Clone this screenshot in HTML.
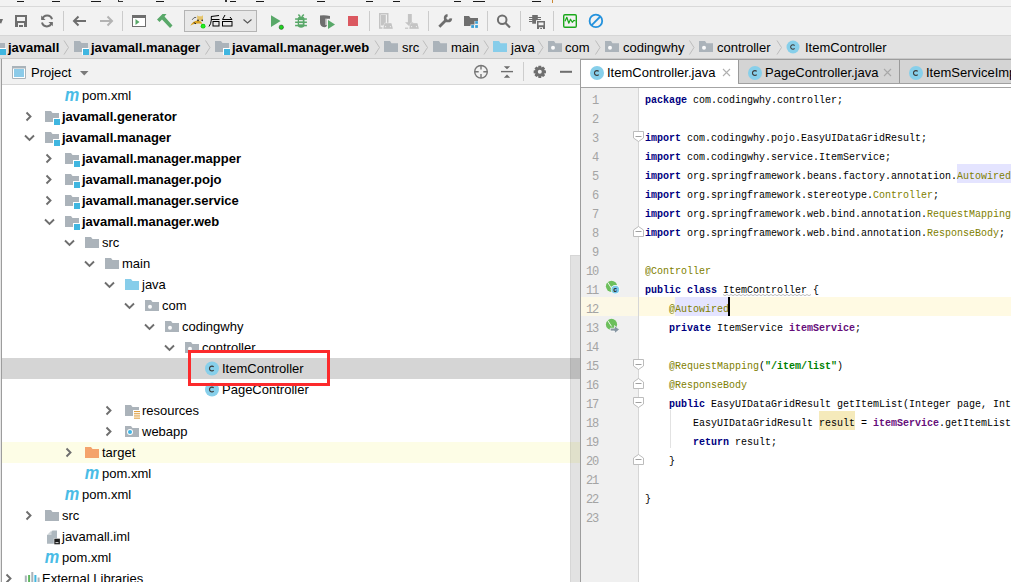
<!DOCTYPE html><html><head><meta charset="utf-8"><style>

*{margin:0;padding:0;box-sizing:border-box}
html,body{width:1011px;height:582px;overflow:hidden;background:#f2f2f2;font-family:"Liberation Sans",sans-serif;font-size:13px;color:#000}
.a{position:absolute}
.t{position:absolute;white-space:pre;line-height:16px}
.b{font-weight:bold}
.ln{position:absolute;left:581px;width:17px;padding-top:4px;text-align:right;font-family:"Liberation Mono",monospace;font-size:12px;color:#a4a4a4;line-height:19px;height:19px;letter-spacing:-1.2px}
.cl{position:absolute;left:645px;padding-top:2px;transform:scaleX(0.8696);transform-origin:0 0;font-family:"Liberation Mono",monospace;font-size:11.5px;line-height:19px;height:19px;white-space:pre;letter-spacing:0px;color:#000}
.k{color:#000080;font-weight:bold}
.an{color:#808000}
.st{color:#008000;font-weight:bold}
.fd{color:#660e7a;font-weight:bold}
#ov{position:absolute;left:0;top:0}

</style></head><body>
<div class="a" style="left:0px;top:0px;width:1011px;height:6px;background:#f2f2f2;"></div>
<div class="a" style="left:0px;top:6px;width:1011px;height:1px;background:#d9d9d9;"></div>
<div class="a" style="left:17px;top:1px;width:7px;height:1px;background:#1a1a1a;"></div>
<div class="a" style="left:52px;top:1px;width:8px;height:1px;background:#1a1a1a;"></div>
<div class="a" style="left:91px;top:1px;width:10px;height:1px;background:#1a1a1a;"></div>
<div class="a" style="left:156px;top:1px;width:8px;height:1px;background:#1a1a1a;"></div>
<div class="a" style="left:230px;top:1px;width:6px;height:1px;background:#1a1a1a;"></div>
<div class="a" style="left:256px;top:1px;width:8px;height:1px;background:#1a1a1a;"></div>
<div class="a" style="left:317px;top:1px;width:8px;height:1px;background:#1a1a1a;"></div>
<div class="a" style="left:366px;top:1px;width:7px;height:1px;background:#1a1a1a;"></div>
<div class="a" style="left:393px;top:1px;width:7px;height:1px;background:#1a1a1a;"></div>
<div class="a" style="left:454px;top:1px;width:7px;height:1px;background:#1a1a1a;"></div>
<div class="a" style="left:473px;top:1px;width:12px;height:1px;background:#1a1a1a;"></div>
<div class="a" style="left:532px;top:1px;width:9px;height:1px;background:#1a1a1a;"></div>
<div class="a" style="left:118px;top:0px;width:1px;height:2px;background:#333;"></div>
<div class="a" style="left:119px;top:1px;width:4px;height:1px;background:#333;"></div>
<div class="a" style="left:225px;top:0px;width:2px;height:2px;background:#333;"></div>
<div class="a" style="left:552px;top:0px;width:1px;height:3px;background:#cc8833;"></div>
<div class="a" style="left:370px;top:1px;width:3px;height:1px;background:#1a1a1a;"></div>
<div class="a" style="left:0px;top:7px;width:1011px;height:28px;background:#f2f2f2;"></div>
<div class="a" style="left:63px;top:11px;width:1px;height:20px;background:#cbcbcb;"></div>
<div class="a" style="left:122px;top:11px;width:1px;height:20px;background:#cbcbcb;"></div>
<div class="a" style="left:369px;top:11px;width:1px;height:20px;background:#cbcbcb;"></div>
<div class="a" style="left:428px;top:11px;width:1px;height:20px;background:#cbcbcb;"></div>
<div class="a" style="left:487px;top:11px;width:1px;height:20px;background:#cbcbcb;"></div>
<div class="a" style="left:520px;top:11px;width:1px;height:20px;background:#cbcbcb;"></div>
<div class="a" style="left:553px;top:11px;width:1px;height:20px;background:#cbcbcb;"></div>
<div class="a" style="left:0px;top:35px;width:1011px;height:1px;background:#d6d6d6;"></div>
<div class="a" style="left:0px;top:36px;width:1011px;height:23px;background:#e2e2e2;"></div>
<div class="a" style="left:0px;top:58px;width:1011px;height:1px;background:#c9c9c9;"></div>
<div class="a" style="left:0px;top:59px;width:580px;height:25px;background:#f2f2f2;"></div>
<div class="a" style="left:0px;top:84px;width:580px;height:1px;background:#d6d6d6;"></div>
<div class="a" style="left:0px;top:85px;width:580px;height:497px;background:#fff;"></div>
<div class="a" style="left:2px;top:358px;width:578px;height:21px;background:#d5d5d5;"></div>
<div class="a" style="left:2px;top:442px;width:578px;height:21px;background:#fdfde6;"></div>
<div class="a" style="left:570px;top:255px;width:10px;height:327px;background:rgba(0,0,0,0.115);border-top:1px solid rgba(0,0,0,0.05);border-left:1px solid rgba(0,0,0,0.05)"></div>
<div class="a" style="left:0px;top:59px;width:1px;height:523px;background:#e6e6e6;"></div>
<div class="a" style="left:1px;top:59px;width:1px;height:523px;background:#9d9d9d;"></div>
<div class="a" style="left:580px;top:59px;width:1px;height:523px;background:#9d9d9d;"></div>
<div class="a" style="left:581px;top:59px;width:430px;height:1px;background:#9d9d9d;"></div>
<div class="a" style="left:581px;top:60px;width:157px;height:27px;background:#ffffff;"></div>
<div class="a" style="left:738px;top:60px;width:273px;height:24px;background:#d4d4d4;"></div>
<div class="a" style="left:738px;top:60px;width:1px;height:24px;background:#9a9a9a;"></div>
<div class="a" style="left:899px;top:60px;width:1px;height:24px;background:#9a9a9a;"></div>
<div class="a" style="left:738px;top:83px;width:273px;height:1px;background:#a0a0a0;"></div>
<div class="a" style="left:738px;top:84px;width:273px;height:3px;background:#ffffff;"></div>
<div class="a" style="left:581px;top:87px;width:430px;height:1px;background:#a4a4a4;"></div>
<div class="a" style="left:581px;top:88px;width:57px;height:494px;background:#f0f0f0;"></div>
<div class="a" style="left:638px;top:88px;width:1px;height:494px;background:#d6d6d6;"></div>
<div class="a" style="left:639px;top:88px;width:372px;height:494px;background:#ffffff;"></div>
<div class="a" style="left:581px;top:297px;width:57px;height:19px;background:#fcf8e6;"></div>
<div class="a" style="left:639px;top:297px;width:372px;height:19px;background:#fffae3;"></div>
<div class="a" style="left:957px;top:164px;width:54px;height:19px;background:#e4e4ff;"></div>
<div class="a" style="left:675px;top:297px;width:53px;height:19px;background:#e4e4ff;"></div>
<div class="a" style="left:819px;top:411px;width:36px;height:19px;background:#f5eabb;"></div>
<div class="t b" style="left:8px;top:40px;">javamall</div>
<div class="t b" style="left:91px;top:40px;">javamall.manager</div>
<div class="t b" style="left:232px;top:40px;">javamall.manager.web</div>
<div class="t " style="left:402px;top:40px;">src</div>
<div class="t " style="left:451px;top:40px;">main</div>
<div class="t " style="left:511px;top:40px;">java</div>
<div class="t " style="left:565px;top:40px;">com</div>
<div class="t " style="left:623px;top:40px;">codingwhy</div>
<div class="t " style="left:717px;top:40px;">controller</div>
<div class="t " style="left:805px;top:40px;">ItemController</div>
<div class="t " style="left:31px;top:65px;">Project</div>
<div class="t " style="left:607px;top:65px;">ItemController.java</div>
<div class="t " style="left:765px;top:65px;">PageController.java</div>
<div class="t " style="left:926px;top:65px;">ItemServiceImpl.java</div>
<div class="t " style="left:82px;top:88px;">pom.xml</div>
<div class="t b" style="left:62px;top:109px;">javamall.generator</div>
<div class="t b" style="left:62px;top:130px;">javamall.manager</div>
<div class="t b" style="left:82px;top:151px;">javamall.manager.mapper</div>
<div class="t b" style="left:82px;top:172px;">javamall.manager.pojo</div>
<div class="t b" style="left:82px;top:193px;">javamall.manager.service</div>
<div class="t b" style="left:82px;top:214px;">javamall.manager.web</div>
<div class="t " style="left:102px;top:235px;">src</div>
<div class="t " style="left:122px;top:256px;">main</div>
<div class="t " style="left:142px;top:277px;">java</div>
<div class="t " style="left:162px;top:298px;">com</div>
<div class="t " style="left:182px;top:319px;">codingwhy</div>
<div class="t " style="left:202px;top:340px;">controller</div>
<div class="t " style="left:222px;top:361px;">ItemController</div>
<div class="t " style="left:222px;top:382px;">PageController</div>
<div class="t " style="left:142px;top:403px;">resources</div>
<div class="t " style="left:142px;top:424px;">webapp</div>
<div class="t " style="left:102px;top:445px;">target</div>
<div class="t " style="left:102px;top:466px;">pom.xml</div>
<div class="t " style="left:82px;top:487px;">pom.xml</div>
<div class="t " style="left:62px;top:508px;">src</div>
<div class="t " style="left:62px;top:529px;">javamall.iml</div>
<div class="t " style="left:62px;top:550px;">pom.xml</div>
<div class="t " style="left:42px;top:571px;">External Libraries</div>
<div class="ln" style="top:88px">1</div>
<div class="cl" style="top:88px"><span class="k">package</span> com.codingwhy.controller;</div>
<div class="ln" style="top:107px">2</div>
<div class="ln" style="top:126px">3</div>
<div class="cl" style="top:126px"><span class="k">import</span> com.codingwhy.pojo.EasyUIDataGridResult;</div>
<div class="ln" style="top:145px">4</div>
<div class="cl" style="top:145px"><span class="k">import</span> com.codingwhy.service.ItemService;</div>
<div class="ln" style="top:164px">5</div>
<div class="cl" style="top:164px"><span class="k">import</span> org.springframework.beans.factory.annotation.<span class="an">Autowired</span>;</div>
<div class="ln" style="top:183px">6</div>
<div class="cl" style="top:183px"><span class="k">import</span> org.springframework.stereotype.<span class="an">Controller</span>;</div>
<div class="ln" style="top:202px">7</div>
<div class="cl" style="top:202px"><span class="k">import</span> org.springframework.web.bind.annotation.<span class="an">RequestMapping</span>;</div>
<div class="ln" style="top:221px">8</div>
<div class="cl" style="top:221px"><span class="k">import</span> org.springframework.web.bind.annotation.<span class="an">ResponseBody</span>;</div>
<div class="ln" style="top:240px">9</div>
<div class="ln" style="top:259px">10</div>
<div class="cl" style="top:259px"><span class="an">@Controller</span></div>
<div class="ln" style="top:278px">11</div>
<div class="cl" style="top:278px"><span class="k">public class</span> ItemController {</div>
<div class="ln" style="top:297px">12</div>
<div class="cl" style="top:297px">    <span class="an">@Autowired</span></div>
<div class="ln" style="top:316px">13</div>
<div class="cl" style="top:316px">    <span class="k">private</span> ItemService <span class="fd">itemService</span>;</div>
<div class="ln" style="top:335px">14</div>
<div class="ln" style="top:354px">15</div>
<div class="cl" style="top:354px">    <span class="an">@RequestMapping</span>(<span class="st">"/item/list"</span>)</div>
<div class="ln" style="top:373px">16</div>
<div class="cl" style="top:373px">    <span class="an">@ResponseBody</span></div>
<div class="ln" style="top:392px">17</div>
<div class="cl" style="top:392px">    <span class="k">public</span> EasyUIDataGridResult getItemList(Integer page, Integer rows) {</div>
<div class="ln" style="top:411px">18</div>
<div class="cl" style="top:411px">        EasyUIDataGridResult result = <span class="fd">itemService</span>.getItemList(page, rows);</div>
<div class="ln" style="top:430px">19</div>
<div class="cl" style="top:430px">        <span class="k">return</span> result;</div>
<div class="ln" style="top:449px">20</div>
<div class="cl" style="top:449px">    }</div>
<div class="ln" style="top:468px">21</div>
<div class="ln" style="top:487px">22</div>
<div class="cl" style="top:487px">}</div>
<div class="ln" style="top:506px">23</div>
<div class="a" style="left:728px;top:297px;width:2px;height:19px;background:#000;"></div>
<svg id="ov" width="1011" height="582" viewBox="0 0 1011 582">
<path d="M-2 19 H3 L1 24 Z" fill="#6e6e6e"/>
<path d="M15 15 H27 V27 H24 V23 H18 V27 H15 Z M17 17 V21 H25 V17 Z" fill="#6e6e6e" fill-rule="evenodd"/><rect x="19" y="25" width="4" height="2" fill="#6e6e6e"/>
<path d="M42.3 19.3 A5 5 0 0 1 52 19.3" fill="none" stroke="#6e6e6e" stroke-width="2"/><path d="M41.2 15.5 V20 H45.5 Z" fill="#6e6e6e"/>
<path d="M51.7 22.6 A5 5 0 0 1 42 22.6" fill="none" stroke="#6e6e6e" stroke-width="2"/><path d="M52.8 26.3 V22 H48.5 Z" fill="#6e6e6e"/>
<path d="M86 21 H74.5 M78.5 16.5 L74 21 L78.5 25.5" fill="none" stroke="#6e6e6e" stroke-width="2"/>
<path d="M100 21 H111.5 M107.5 16.5 L112 21 L107.5 25.5" fill="none" stroke="#b3b3b3" stroke-width="2"/>
<rect x="132.5" y="15.5" width="13" height="11" fill="#fff" stroke="#6e6e6e" stroke-width="1"/><rect x="132" y="15" width="14" height="3" fill="#6e6e6e"/><path d="M135.5 19 L139.5 22 L135.5 25 Z" fill="#59a869"/>
<path d="M157 19.5 L162.5 14 H166.5 L164.5 16.5 L172.5 25.5 L170 28 L162 19.5 L159.5 22 Z" fill="#59a869"/>
<rect x="184.5" y="10.5" width="72" height="21" fill="#e8e8e8" stroke="#b4b4b4" stroke-width="1"/>
<path d="M190.3 25.8 Q192.5 21 198 20.2 Q201.5 21 202.5 23.8 Q198.5 23.2 195 23.8 Q192.5 24.2 190.3 25.8 Z" fill="#dba422"/><path d="M197.2 15.2 L198.6 16.3 H201.6 L203 15.2 V20 Q200 21.2 197.2 20 Z" fill="#e5c46a"/><circle cx="198" cy="20.4" r="0.8" fill="#222"/><circle cx="202.2" cy="20.4" r="0.8" fill="#222"/><path d="M196.2 17.4 Q193.8 16.8 192.2 19.8" fill="none" stroke="#555" stroke-width="0.9"/><path d="M193.8 22.6 L196 23.8" stroke="#222" stroke-width="1"/><circle cx="203.1" cy="26.2" r="2.4" fill="#10c810"/><circle cx="203.1" cy="26.2" r="1.6" fill="#22ee22"/>
<g fill="none" stroke="#000" stroke-width="1.0"><path d="M211 16.5 L219 15.5"/><path d="M211.3 16.5 V20 Q211 24 209 26.5"/><path d="M211.3 19.5 H219.5"/><rect x="213" y="21.5" width="6" height="4.5"/><path d="M225 15 L222.5 19.5 H232"/><path d="M230 17 L232 19.5"/><rect x="222.5" y="21.5" width="9.5" height="4.5"/></g>
<path d="M243.5 19.5 L247.5 23 L251.5 19.5" fill="none" stroke="#555" stroke-width="1.1"/>
<path d="M271 15.2 V26.9 L280.6 21 Z" fill="#59a869"/><circle cx="281.3" cy="27.2" r="2.2" fill="#1ed51e" stroke="#333" stroke-width="0.5"/>
<g fill="#59a869"><path d="M297.7 19 Q297.7 16.6 301.1 16.6 Q304.5 16.6 304.5 19 V25 Q304.5 27.8 301.1 27.8 Q297.7 27.8 297.7 25 Z"/><rect x="295.1" y="18.3" width="11.8" height="1.5"/><rect x="295.1" y="21.5" width="11.8" height="1.5"/><rect x="295.1" y="24.8" width="11.8" height="1.5"/></g><path d="M298.4 14.5 L300.3 16.8 M303.8 14.5 L301.9 16.8" stroke="#59a869" stroke-width="1.5"/><rect x="299" y="20.1" width="3.8" height="1.2" fill="#f2f2f2"/><rect x="299" y="23.1" width="3.8" height="1.2" fill="#f2f2f2"/>
<path d="M320 15.6 Q325 14.9 330 16.1 V18.7 H327 V24.5 Q327 27.3 324.3 27.2 Q320 26.5 320 22.5 Z" fill="#6e6e6e"/><rect x="325.4" y="18.6" width="1.4" height="6.5" fill="#f2f2f2" opacity="0.85"/><path d="M328 20 V28.9 L335 24.4 Z" fill="#59a869"/>
<rect x="348" y="16" width="10" height="10" fill="#db5860"/>
<g fill="#c4c4c4"><path d="M379 13 H388.5 V23 H387 V14.5 H380.5 V27.3 H382.5 V28.8 H379 Z"/><rect x="381" y="15" width="4.8" height="10.5"/><path d="M383.3 28.8 L384.6 23.2 H391.4 L392.8 28.8 Z" stroke="#f2f2f2" stroke-width="0.8"/><path d="M383.3 28.8 L384.6 23.2 H391.4 L392.8 28.8 Z"/><rect x="407.9" y="14" width="3.9" height="9"/><path d="M405 22.3 H413.5 L409.5 26.5 Z"/><rect x="405" y="27.6" width="3.2" height="1.2"/><path d="M409.3 28.8 L410.6 23.2 H417.4 L418.8 28.8 Z" stroke="#f2f2f2" stroke-width="0.8"/><path d="M409.3 28.8 L410.6 23.2 H417.4 L418.8 28.8 Z"/></g><g fill="#f2f2f2"><circle cx="385.6" cy="26.6" r="0.6"/><circle cx="390.4" cy="26.6" r="0.6"/><circle cx="411.6" cy="26.6" r="0.6"/><circle cx="416.4" cy="26.6" r="0.6"/></g>
<path d="M439.3 26.7 L446.3 19.7" stroke="#6e6e6e" stroke-width="2.8"/><path d="M450.9 18.4 A2.9 2.9 0 1 1 447.6 15.3" fill="none" stroke="#6e6e6e" stroke-width="2.6"/>
<path d="M464 16 H469 L470.5 18 H478 V21 H474.5 V24.5 H470.5 V26 H464 Z" fill="#6e6e6e"/><g fill="#389fd6"><rect x="475.2" y="21.2" width="2.7" height="2.6"/><rect x="471.2" y="25.1" width="2.8" height="2.8"/><rect x="475.2" y="25.1" width="2.7" height="2.8"/></g>
<circle cx="502.2" cy="19.8" r="4.3" fill="none" stroke="#6e6e6e" stroke-width="2"/><path d="M505.5 23 L510 27.5" stroke="#6e6e6e" stroke-width="2.2"/>
<g fill="#6e6e6e"><rect x="532.2" y="15" width="5.6" height="8.7"/><rect x="529" y="17" width="12" height="1"/><rect x="529" y="19" width="12" height="1"/><rect x="529" y="21" width="3.5" height="1"/></g><rect x="536" y="20.2" width="10" height="10" fill="#f2f2f2"/><path d="M537 21 H545 V29 H543 V27.2 H539 V29 H537 Z M538.5 22.5 V25.2 H543.5 V22.5 Z" fill="#6e6e6e" fill-rule="evenodd"/><rect x="540.2" y="28" width="1.8" height="1" fill="#6e6e6e"/>
<rect x="563.7" y="14.7" width="12.6" height="12.6" rx="1.2" fill="none" stroke="#1aa81a" stroke-width="1.4"/><path d="M565 21.2 L566.8 17.3 L568.8 23.2 L570.5 19.2 L572.3 22.3 L573.8 20.3 L575.5 21" fill="none" stroke="#1aa81a" stroke-width="1.2" stroke-linejoin="round"/>
<circle cx="595.9" cy="20.9" r="6.3" fill="none" stroke="#2492dd" stroke-width="1.8"/><path d="M591.5 25.3 L600.3 16.5" stroke="#2492dd" stroke-width="1.8"/>
<text x="64.7" y="100.6" font-family="Liberation Sans" font-style="italic" font-weight="bold" font-size="17.5" fill="#4abce6" textLength="14.5" lengthAdjust="spacingAndGlyphs">m</text>
<path d="M26.5 112.5 L30.5 116.5 L26.5 120.5" fill="none" stroke="#6e6e6e" stroke-width="1.9"/>
<path d="M45 111.0 H51 L52.5 113.0 H59 V122.0 H45 Z" fill="#abb3ba"/>
<rect x="53" y="118.0" width="7" height="7" fill="#fff"/><rect x="54" y="119.0" width="6" height="6" fill="#40b6e0"/>
<path d="M25 135.5 L29.5 140.0 L34 135.5" fill="none" stroke="#6e6e6e" stroke-width="1.9"/>
<path d="M45 132.0 H51 L52.5 134.0 H59 V143.0 H45 Z" fill="#abb3ba"/>
<rect x="53" y="139.0" width="7" height="7" fill="#fff"/><rect x="54" y="140.0" width="6" height="6" fill="#40b6e0"/>
<path d="M46.5 154.5 L50.5 158.5 L46.5 162.5" fill="none" stroke="#6e6e6e" stroke-width="1.9"/>
<path d="M65 153.0 H71 L72.5 155.0 H79 V164.0 H65 Z" fill="#abb3ba"/>
<rect x="73" y="160.0" width="7" height="7" fill="#fff"/><rect x="74" y="161.0" width="6" height="6" fill="#40b6e0"/>
<path d="M46.5 175.5 L50.5 179.5 L46.5 183.5" fill="none" stroke="#6e6e6e" stroke-width="1.9"/>
<path d="M65 174.0 H71 L72.5 176.0 H79 V185.0 H65 Z" fill="#abb3ba"/>
<rect x="73" y="181.0" width="7" height="7" fill="#fff"/><rect x="74" y="182.0" width="6" height="6" fill="#40b6e0"/>
<path d="M46.5 196.5 L50.5 200.5 L46.5 204.5" fill="none" stroke="#6e6e6e" stroke-width="1.9"/>
<path d="M65 195.0 H71 L72.5 197.0 H79 V206.0 H65 Z" fill="#abb3ba"/>
<rect x="73" y="202.0" width="7" height="7" fill="#fff"/><rect x="74" y="203.0" width="6" height="6" fill="#40b6e0"/>
<path d="M45 219.5 L49.5 224.0 L54 219.5" fill="none" stroke="#6e6e6e" stroke-width="1.9"/>
<path d="M65 216.0 H71 L72.5 218.0 H79 V227.0 H65 Z" fill="#abb3ba"/>
<rect x="73" y="223.0" width="7" height="7" fill="#fff"/><rect x="74" y="224.0" width="6" height="6" fill="#40b6e0"/>
<path d="M65 240.5 L69.5 245.0 L74 240.5" fill="none" stroke="#6e6e6e" stroke-width="1.9"/>
<path d="M85 237.0 H91 L92.5 239.0 H99 V248.0 H85 Z" fill="#abb3ba"/>
<path d="M85 261.5 L89.5 266.0 L94 261.5" fill="none" stroke="#6e6e6e" stroke-width="1.9"/>
<path d="M105 258.0 H111 L112.5 260.0 H119 V269.0 H105 Z" fill="#abb3ba"/>
<path d="M105 282.5 L109.5 287.0 L114 282.5" fill="none" stroke="#6e6e6e" stroke-width="1.9"/>
<path d="M125 279.0 H131 L132.5 281.0 H139 V290.0 H125 Z" fill="#87cdea"/>
<path d="M125 303.5 L129.5 308.0 L134 303.5" fill="none" stroke="#6e6e6e" stroke-width="1.9"/>
<path d="M145 300.0 H151 L152.5 302.0 H159 V311.0 H145 Z" fill="#abb3ba"/>
<circle cx="150" cy="306.8" r="2" fill="#fff" opacity="0.95"/>
<path d="M145 324.5 L149.5 329.0 L154 324.5" fill="none" stroke="#6e6e6e" stroke-width="1.9"/>
<path d="M165 321.0 H171 L172.5 323.0 H179 V332.0 H165 Z" fill="#abb3ba"/>
<circle cx="170" cy="327.8" r="2" fill="#fff" opacity="0.95"/>
<path d="M165 345.5 L169.5 350.0 L174 345.5" fill="none" stroke="#6e6e6e" stroke-width="1.9"/>
<path d="M185 342.0 H191 L192.5 344.0 H199 V353.0 H185 Z" fill="#abb3ba"/>
<circle cx="190" cy="348.8" r="2" fill="#fff" opacity="0.95"/>
<circle cx="212" cy="368.5" r="7" fill="#87cfea"/><path d="M213.70 366.92 A2.40 2.40 0 1 0 213.70 370.08" fill="none" stroke="#3c3c3c" stroke-width="1.15"/>
<circle cx="212" cy="389.5" r="7" fill="#87cfea"/><path d="M213.70 387.92 A2.40 2.40 0 1 0 213.70 391.08" fill="none" stroke="#3c3c3c" stroke-width="1.15"/>
<path d="M106.5 406.5 L110.5 410.5 L106.5 414.5" fill="none" stroke="#6e6e6e" stroke-width="1.9"/>
<path d="M125 405.0 H131 L132.5 407.0 H139 V416.0 H125 Z" fill="#abb3ba"/>
<rect x="133" y="410.0" width="8" height="9" fill="#fff"/>
<rect x="134" y="411.0" width="6" height="1.1" fill="#e0a040"/>
<rect x="134" y="413.2" width="6" height="1.1" fill="#e0a040"/>
<rect x="134" y="415.4" width="6" height="1.1" fill="#e0a040"/>
<rect x="134" y="417.6" width="6" height="1.1" fill="#e0a040"/>
<path d="M106.5 427.5 L110.5 431.5 L106.5 435.5" fill="none" stroke="#6e6e6e" stroke-width="1.9"/>
<path d="M125 426.0 H131 L132.5 428.0 H139 V437.0 H125 Z" fill="#abb3ba"/>
<circle cx="130" cy="432.0" r="3" fill="#fff"/><circle cx="130" cy="432.0" r="2" fill="#3eb4e4"/>
<path d="M66.5 448.5 L70.5 452.5 L66.5 456.5" fill="none" stroke="#6e6e6e" stroke-width="1.9"/>
<path d="M85 447.0 H91 L92.5 449.0 H99 V458.0 H85 Z" fill="#f4a36c"/>
<text x="84.7" y="478.6" font-family="Liberation Sans" font-style="italic" font-weight="bold" font-size="17.5" fill="#4abce6" textLength="14.5" lengthAdjust="spacingAndGlyphs">m</text>
<text x="64.7" y="499.6" font-family="Liberation Sans" font-style="italic" font-weight="bold" font-size="17.5" fill="#4abce6" textLength="14.5" lengthAdjust="spacingAndGlyphs">m</text>
<path d="M26.5 511.5 L30.5 515.5 L26.5 519.5" fill="none" stroke="#6e6e6e" stroke-width="1.9"/>
<path d="M45 510.0 H51 L52.5 512.0 H59 V521.0 H45 Z" fill="#abb3ba"/>
<path d="M48 535.0 L52.5 530.5 H57 V543.7 H47 V535.0 Z" fill="#aeb8bf"/><path d="M47 535.0 L51.5 530.5 V535.0 Z" fill="#d0d6da"/><rect x="53.8" y="538.2" width="6.4" height="6.4" fill="#fff"/><rect x="54.3" y="538.7" width="5.6" height="5.6" fill="#1e1e1e"/><rect x="55.5" y="542.1" width="3" height="1" fill="#ddd"/>
<text x="44.7" y="562.6" font-family="Liberation Sans" font-style="italic" font-weight="bold" font-size="17.5" fill="#4abce6" textLength="14.5" lengthAdjust="spacingAndGlyphs">m</text>
<path d="M6.5 574.5 L10.5 578.5 L6.5 582.5" fill="none" stroke="#6e6e6e" stroke-width="1.9"/>
<rect x="24.8" y="575.5" width="2" height="6.5" fill="#a9b3ba"/>
<rect x="28.1" y="575" width="2" height="7" fill="#5fb85f"/>
<rect x="31.3" y="572" width="2" height="10" fill="#a9b3ba"/>
<rect x="34.4" y="575" width="2" height="7" fill="#40b6e0"/>
<rect x="37.599999999999994" y="577.5" width="2" height="4.5" fill="#a9b3ba"/>
<rect x="189.5" y="351.5" width="139" height="33" fill="none" stroke="#fc2a2c" stroke-width="3"/>
<path d="M-9 41 H-3 L-1.5 43 H5 V52 H-9 Z" fill="#abb3ba"/>
<rect x="-1" y="48" width="7" height="7" fill="#fff"/><rect x="0" y="49" width="6" height="6" fill="#40b6e0"/>
<path d="M64 40.5 L68.5 47.5 L64 54.5" fill="none" stroke="#bdbdbd" stroke-width="1"/>
<path d="M74 41 H80 L81.5 43 H88 V52 H74 Z" fill="#abb3ba"/>
<rect x="82" y="48" width="7" height="7" fill="#fff"/><rect x="83" y="49" width="6" height="6" fill="#40b6e0"/>
<path d="M205.5 40.5 L210.0 47.5 L205.5 54.5" fill="none" stroke="#bdbdbd" stroke-width="1"/>
<path d="M215 41 H221 L222.5 43 H229 V52 H215 Z" fill="#abb3ba"/>
<rect x="223" y="48" width="7" height="7" fill="#fff"/><rect x="224" y="49" width="6" height="6" fill="#40b6e0"/>
<path d="M375 40.5 L379.5 47.5 L375 54.5" fill="none" stroke="#bdbdbd" stroke-width="1"/>
<path d="M384 41 H390 L391.5 43.2 H398 V52 H384 Z" fill="#abb3ba"/>
<path d="M423 40.5 L427.5 47.5 L423 54.5" fill="none" stroke="#bdbdbd" stroke-width="1"/>
<path d="M433 41 H439 L440.5 43.2 H447 V52 H433 Z" fill="#abb3ba"/>
<path d="M484 40.5 L488.5 47.5 L484 54.5" fill="none" stroke="#bdbdbd" stroke-width="1"/>
<path d="M493 41 H499 L500.5 43.2 H507 V52 H493 Z" fill="#87cdea"/>
<path d="M538.5 40.5 L543.0 47.5 L538.5 54.5" fill="none" stroke="#bdbdbd" stroke-width="1"/>
<path d="M548 41 H554 L555.5 43.2 H562 V52 H548 Z" fill="#abb3ba"/>
<circle cx="553" cy="47.8" r="2" fill="#fff" opacity="0.95"/>
<path d="M595.5 40.5 L600.0 47.5 L595.5 54.5" fill="none" stroke="#bdbdbd" stroke-width="1"/>
<path d="M605 41 H611 L612.5 43.2 H619 V52 H605 Z" fill="#abb3ba"/>
<circle cx="610" cy="47.8" r="2" fill="#fff" opacity="0.95"/>
<path d="M689.5 40.5 L694.0 47.5 L689.5 54.5" fill="none" stroke="#bdbdbd" stroke-width="1"/>
<path d="M699 41 H705 L706.5 43.2 H713 V52 H699 Z" fill="#abb3ba"/>
<circle cx="704" cy="47.8" r="2" fill="#fff" opacity="0.95"/>
<path d="M777 40.5 L781.5 47.5 L777 54.5" fill="none" stroke="#bdbdbd" stroke-width="1"/>
<circle cx="793" cy="47" r="6.5" fill="#87cfea"/><path d="M794.58 45.53 A2.23 2.23 0 1 0 794.58 48.47" fill="none" stroke="#3c3c3c" stroke-width="1.07"/>
<path d="M12.5 66.5 H25.5 V78.5 H12.5 Z" fill="#fff" stroke="#a9b3ba" stroke-width="1"/><rect x="12" y="66" width="14" height="2.5" fill="#a9b3ba"/><rect x="14" y="69" width="10" height="8" fill="#8ccbe9"/>
<path d="M80 71 H88.5 L84.25 75.5 Z" fill="#7a7a7a"/>
<circle cx="481" cy="71.8" r="6.3" fill="none" stroke="#777" stroke-width="1.4"/><path d="M481 65.5 V69.5 M481 74 V78 M474.7 71.8 H478.7 M483.3 71.8 H487.3" stroke="#777" stroke-width="1.4"/>
<path d="M501 71.6 H513" stroke="#6e6e6e" stroke-width="1.4"/><path d="M503.8 66.3 H510.2 L507 69.3 Z M503.8 77.8 H510.2 L507 74.5 Z" fill="#6e6e6e"/>
<rect x="523" y="62" width="1" height="19" fill="#cdcdcd"/>
<path d="M545.95 70.43 L545.95 73.17 L544.07 73.51 L544.03 73.61 L545.12 75.18 L543.18 77.12 L541.61 76.03 L541.51 76.07 L541.17 77.95 L538.43 77.95 L538.09 76.07 L537.99 76.03 L536.42 77.12 L534.48 75.18 L535.57 73.61 L535.53 73.51 L533.65 73.17 L533.65 70.43 L535.53 70.09 L535.57 69.99 L534.48 68.42 L536.42 66.48 L537.99 67.57 L538.09 67.53 L538.43 65.65 L541.17 65.65 L541.51 67.53 L541.61 67.57 L543.18 66.48 L545.12 68.42 L544.03 69.99 L544.07 70.09 Z M541.8 71.8 A2 2 0 1 0 537.8 71.8 A2 2 0 1 0 541.8 71.8 Z" fill="#6e6e6e" fill-rule="evenodd"/>
<rect x="560" y="70.8" width="12" height="2" fill="#6e6e6e"/>
<circle cx="597" cy="73" r="7" fill="#87cfea"/><path d="M598.70 71.42 A2.40 2.40 0 1 0 598.70 74.58" fill="none" stroke="#3c3c3c" stroke-width="1.15"/>
<circle cx="755" cy="73" r="7" fill="#87cfea"/><path d="M756.70 71.42 A2.40 2.40 0 1 0 756.70 74.58" fill="none" stroke="#3c3c3c" stroke-width="1.15"/>
<circle cx="916" cy="73" r="7" fill="#87cfea"/><path d="M917.70 71.42 A2.40 2.40 0 1 0 917.70 74.58" fill="none" stroke="#3c3c3c" stroke-width="1.15"/>
<path d="M723 69 L730 76 M730 69 L723 76" stroke="#b0b0b0" stroke-width="1.1"/>
<path d="M884 69 L891 76 M891 69 L884 76" stroke="#a8a8a8" stroke-width="1.1"/>
<circle cx="611.5" cy="286.3" r="5.6" fill="#6cbf5c"/><path d="M607.5 282.1 L611.5 288.3" stroke="#fff" stroke-width="0.9"/>
<circle cx="615.3" cy="289.6" r="4.6" fill="#fff"/><circle cx="615.3" cy="289.6" r="3.9" fill="#7ccbea"/><text x="615.3" y="291.90000000000003" text-anchor="middle" font-family="Liberation Sans" font-size="7" fill="#222" font-weight="bold">c</text>
<circle cx="611.5" cy="324.4" r="5.6" fill="#6cbf5c"/><path d="M607.5 320.2 L611.5 326.4" stroke="#fff" stroke-width="0.9"/>
<path d="M610.3 328.2 H614.5 V325.59999999999997 L619.5 329.59999999999997 L614.5 333.59999999999997 V331.0 H610.3 Z" fill="#8796a2" stroke="#fff" stroke-width="0.7"/>
<path d="M633.5 131.5 H643.5 V138 L638.5 141.5 L633.5 138 Z" fill="#fff" stroke="#bcbcbc" stroke-width="1"/>
<path d="M633.5 236.5 H643.5 V230 L638.5 226.5 L633.5 230 Z" fill="#fff" stroke="#bcbcbc" stroke-width="1"/>
<path d="M633.5 359.5 H643.5 V366 L638.5 369.5 L633.5 366 Z" fill="#fff" stroke="#bcbcbc" stroke-width="1"/>
<path d="M633.5 388.5 H643.5 V382 L638.5 378.5 L633.5 382 Z" fill="#fff" stroke="#bcbcbc" stroke-width="1"/>
<path d="M633.5 397.5 H643.5 V404 L638.5 407.5 L633.5 404 Z" fill="#fff" stroke="#bcbcbc" stroke-width="1"/>
<path d="M633.5 464.5 H643.5 V458 L638.5 454.5 L633.5 458 Z" fill="#fff" stroke="#bcbcbc" stroke-width="1"/>
<path d="M635.5 136.5 H641.5" stroke="#a0a0a0" stroke-width="1"/>
<path d="M635.5 231.5 H641.5" stroke="#a0a0a0" stroke-width="1"/>
<path d="M635.5 364.5 H641.5" stroke="#a0a0a0" stroke-width="1"/>
<path d="M635.5 383.5 H641.5" stroke="#a0a0a0" stroke-width="1"/>
<path d="M635.5 402.5 H641.5" stroke="#a0a0a0" stroke-width="1"/>
<path d="M635.5 459.5 H641.5" stroke="#a0a0a0" stroke-width="1"/>
<rect x="670" y="410" width="1" height="38" fill="#e2e2e2"/>
<polyline points="723 294.5 725 295.7 727 294.5 729 295.7 731 294.5 733 295.7 735 294.5 737 295.7 739 294.5 741 295.7 743 294.5 745 295.7 747 294.5 749 295.7 751 294.5 753 295.7 755 294.5 757 295.7 759 294.5 761 295.7 763 294.5 765 295.7 767 294.5 769 295.7 771 294.5 773 295.7 775 294.5 777 295.7 779 294.5 781 295.7 783 294.5 785 295.7 787 294.5 789 295.7 791 294.5 793 295.7 795 294.5 797 295.7 799 294.5 801 295.7 803 294.5 805 295.7 807 294.5 809 295.7 811 294.5" fill="none" stroke="#a0a0a0" stroke-width="0.7"/>
</svg></body></html>
